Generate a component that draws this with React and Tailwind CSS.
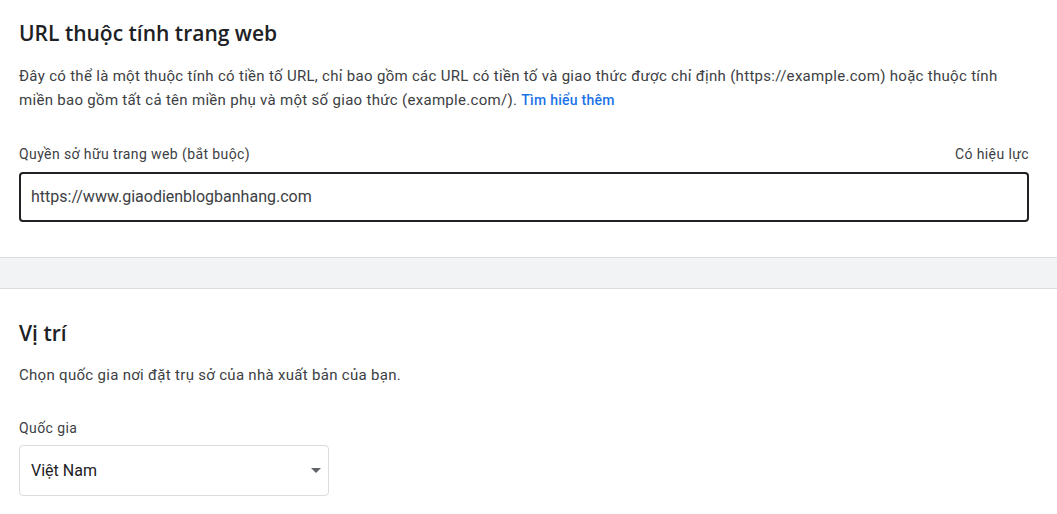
export default function App() {
  return (
    <div className="w-[1057px] min-h-[514px] bg-white text-[#3c4043]" style={{ fontFamily: "Roboto, 'Liberation Sans', sans-serif" }}>
      {/* URL section */}
      <section className="px-[19px] pt-[19px] pb-[35px] border-b border-[#dadce0]">
        <h2 className="text-[21px] leading-[28px] font-semibold text-[#202124]" style={{ fontFamily: "'Open Sans', Roboto, sans-serif" }}>
          URL thuộc tính trang web
        </h2>
        <p className="mt-[17px] w-[995px] text-[15px] leading-[24px] tracking-[0.3px] text-[#3c4043]">
          Đây có thể là một thuộc tính có tiền tố URL, chỉ bao gồm các URL có tiền tố và giao thức được chỉ định (https://example.com) hoặc thuộc tính miền bao gồm tất cả tên miền phụ và một số giao thức (example.com/).{" "}
          <a href="#" className="text-[14px] font-medium tracking-[0.25px] text-[#1a73e8]">Tìm hiểu thêm</a>
        </p>
        <div className="mt-[33px] w-[1010px]">
          <div className="flex justify-between text-[14px] leading-[18px] tracking-[0.4px] text-[#3c4043]">
            <span>Quyền sở hữu trang web (bắt buộc)</span>
            <span>Có hiệu lực</span>
          </div>
          <div className="mt-[9px] h-[50px] flex items-center px-[10px] border-2 border-[#202124] rounded-[4px] text-[16px] text-[#3c4043]">
            https://www.giaodienblogbanhang.com
          </div>
        </div>
      </section>

      <div className="h-[31px] bg-[#f1f3f4] border-b border-[#dadce0]" />

      {/* Location section */}
      <section className="px-[19px] pt-[30px] pb-[18px]">
        <h2 className="text-[21px] leading-[28px] font-semibold text-[#202124]" style={{ fontFamily: "'Open Sans', Roboto, sans-serif" }}>
          Vị trí
        </h2>
        <p className="mt-[16px] text-[15px] leading-[24px] tracking-[0.3px] text-[#3c4043]">
          Chọn quốc gia nơi đặt trụ sở của nhà xuất bản của bạn.
        </p>
        <div className="mt-[32px] text-[14px] leading-[18px] tracking-[0.4px] text-[#3c4043]">Quốc gia</div>
        <div className="mt-[8px] w-[310px] h-[51px] flex items-center justify-between pl-[11px] pr-[7px] border border-[#dadce0] rounded-[4px]">
          <span className="text-[16px] text-[#202124]">Việt Nam</span>
          <svg width="10" height="5" viewBox="0 0 10 5">
            <path d="M0 0 L10 0 L5 5 Z" fill="#5f6368" />
          </svg>
        </div>
      </section>
    </div>
  );
}
